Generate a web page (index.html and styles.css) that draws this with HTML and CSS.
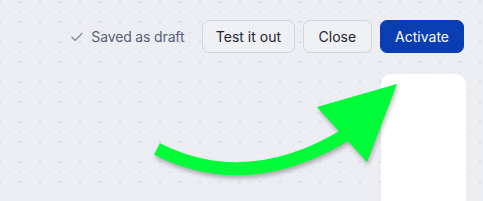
FILE: index.html
```html
<!DOCTYPE html>
<html>
<head>
<meta charset="utf-8">
<link rel="stylesheet" href="styles.css">
</head>
<body>
<div class="canvas">
  <header class="toolbar">
    <span class="status">
      <svg class="check" width="12" height="10" viewBox="0 0 12 10"><path d="M1 5.2 L4.2 8.4 L11 1.4" fill="none" stroke="#7a8096" stroke-width="1.3" stroke-linecap="round" stroke-linejoin="round"/></svg>
      Saved as draft
    </span>
    <button class="btn btn-outline">Test it out</button>
    <button class="btn btn-outline">Close</button>
    <button class="btn btn-primary">Activate</button>
  </header>
  <div class="panel"></div>
  <svg class="arrow" width="483" height="201" viewBox="0 0 483 201">
    <g class="arrow-shape">
      <path d="M157 149 Q250 196 352 131" fill="none" stroke="#00fc38" stroke-width="13"/>
      <polygon points="317,107 397,84 367,162" fill="#00fc38"/>
    </g>
  </svg>
</div>
</body>
</html>
```
FILE: styles.css
```css
html, body {
  margin: 0;
  padding: 0;
}
body {
  width: 483px;
  height: 201px;
  overflow: hidden;
  font-family: "Inter", "Lato", sans-serif;
}
.canvas {
  position: relative;
  width: 483px;
  height: 201px;
  background-color: #eceef3;
  background-image:
    radial-gradient(circle, #d9dce3 1.3px, transparent 1.6px),
    radial-gradient(circle, #e3e5eb 1.1px, transparent 1.4px);
  background-size: 20px 20px, 10px 10px;
  background-position: -10px -8px, -5px -3px;
  display: flex;
  flex-direction: column;
}
.toolbar {
  display: flex;
  justify-content: flex-end;
  align-items: center;
  gap: 8px;
  padding: 20px 19px 0 0;
  height: 33px;
}
.status {
  display: flex;
  align-items: center;
  gap: 8px;
  font-size: 14px;
  color: #566078;
  margin-right: 10px;
  letter-spacing: -0.15px;
}
.check {
  margin-top: 1px;
}
.btn {
  height: 33px;
  border-radius: 7px;
  font-family: inherit;
  font-size: 14px;
  padding: 0 12.5px;
  cursor: pointer;
}
.btn-outline {
  background: #eef0f4;
  border: 1px solid #d2d5dd;
  color: #1f2330;
}
.btn-outline + .btn-outline {
  padding: 0 15px;
}
.btn-primary {
  background: #0b3db2;
  border: 1px solid #0b3db2;
  color: #ffffff;
  padding: 0 14px;
  margin-top: -1px;
}
.panel {
  margin: 21px 0 0 381px;
  width: 85px;
  flex: 1;
  background: #ffffff;
  border-radius: 11px 11px 0 0;
}
.arrow {
  position: absolute;
  left: 0;
  top: 0;
}
.arrow-shape {
  filter: drop-shadow(1px 3px 2px rgba(0, 0, 0, 0.28));
}
```
